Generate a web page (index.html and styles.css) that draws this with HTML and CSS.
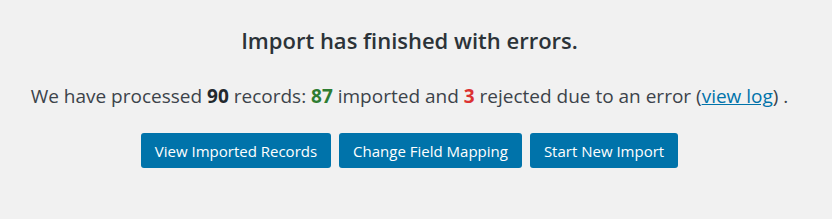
FILE: index.html
```html
<!DOCTYPE html>
<html lang="en">
<head>
  <meta charset="UTF-8">
  <title>Import finished</title>
  <link rel="stylesheet" href="styles.css">
</head>
<body>
  <div class="result">
    <h2 class="result-title">Import has finished with errors.</h2>
    <p class="result-summary">
      We have processed <strong>90</strong> records:
      <strong class="ok">87</strong> imported and
      <strong class="bad">3</strong> rejected due to an error
      (<a href="#">view log</a>) .
    </p>
    <div class="actions">
      <button class="btn">View Imported Records</button>
      <button class="btn">Change Field Mapping</button>
      <button class="btn">Start New Import</button>
    </div>
  </div>
</body>
</html>
```

FILE: styles.css
```css
body {
  margin: 0;
  background-color: #f1f1f1;
  font-family: "Open Sans", sans-serif;
  color: #3c434a;
}
.result {
  padding: 24px 13px 0 0;
  text-align: center;
}
.result-title {
  margin: 0;
  font-size: 22px;
  font-weight: 600;
  line-height: 32px;
  color: #2c3338;
}
.result-summary {
  margin: 26px 0 0;
  font-size: 19px;
  line-height: 28px;
}
.result-summary strong {
  font-weight: 700;
  color: #23282d;
}
.result-summary strong.ok {
  color: #2e7d32;
}
.result-summary strong.bad {
  color: #dc3232;
}
.result-summary a {
  color: #0073aa;
}
.actions {
  margin-top: 23px;
  display: flex;
  justify-content: center;
  gap: 8px;
}
.btn {
  font-family: inherit;
  font-size: 15px;
  color: #fff;
  background-color: #0073aa;
  border: 0;
  border-radius: 3px;
  height: 35px;
  padding: 0 14px;
  cursor: pointer;
}
```
